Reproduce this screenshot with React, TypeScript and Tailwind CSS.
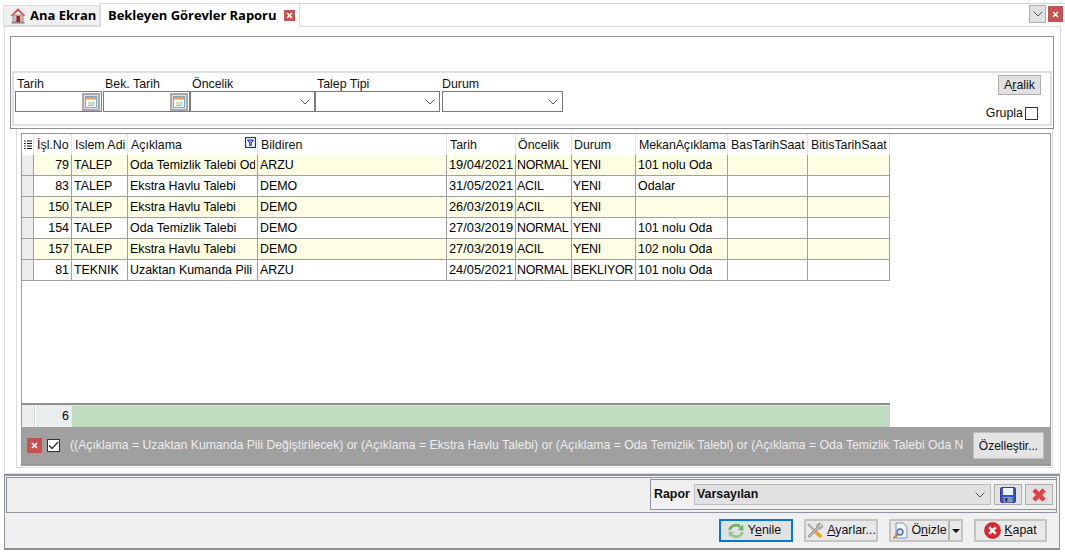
import React from "react";

const cols = [
  { t: "İşl.No", w: "w-[38px]" },
  { t: "Islem Adi", w: "w-[56px]" },
  { t: "Açıklama", w: "w-[130px]" },
  { t: "Bildiren", w: "w-[189px]" },
  { t: "Tarih", w: "w-[69px]" },
  { t: "Öncelik", w: "w-[56px]" },
  { t: "Durum", w: "w-[64px]" },
  { t: "MekanAçıklama", w: "w-[92px]" },
  { t: "BasTarihSaat", w: "w-[80px]" },
  { t: "BitisTarihSaat", w: "w-[82px]" },
];

const rows = [
  ["79", "TALEP", "Oda Temizlik Talebi Oda", "ARZU", "19/04/2021", "NORMAL", "YENI", "101 nolu Oda", "", ""],
  ["83", "TALEP", "Ekstra Havlu Talebi", "DEMO", "31/05/2021", "ACIL", "YENI", "Odalar", "", ""],
  ["150", "TALEP", "Ekstra Havlu Talebi", "DEMO", "26/03/2019", "ACIL", "YENI", "", "", ""],
  ["154", "TALEP", "Oda Temizlik Talebi", "DEMO", "27/03/2019", "NORMAL", "YENI", "101 nolu Oda", "", ""],
  ["157", "TALEP", "Ekstra Havlu Talebi", "DEMO", "27/03/2019", "ACIL", "YENI", "102 nolu Oda", "", ""],
  ["81", "TEKNIK", "Uzaktan Kumanda Pili", "ARZU", "24/05/2021", "NORMAL", "BEKLIYOR", "101 nolu Oda", "", ""],
];

function RedX({ cls }: { cls: string }) {
  return (
    <div className={`flex items-center justify-center bg-[#c75050] text-white ${cls}`}>
      <svg width="7" height="7" viewBox="0 0 7 7">
        <path d="M1 1L6 6M6 1L1 6" stroke="#fff" strokeWidth="1.6" />
      </svg>
    </div>
  );
}

function Chevron({ color = "#555" }: { color?: string }) {
  return (
    <svg width="10" height="6" viewBox="0 0 10 6">
      <path d="M0.5 0.5L5 5L9.5 0.5" fill="none" stroke={color} strokeWidth="1" />
    </svg>
  );
}

function HomeIcon() {
  return (
    <svg width="16" height="17" viewBox="0 0 16 17">
      <path d="M3 8H13V15H3Z" fill="#c9bfbd" stroke="#8e7f7e" strokeWidth="0.8" />
      <path d="M0.8 8.5L8 1.2L15.2 8.5L13.6 9.2L8 4L2.4 9.2Z" fill="#cf4340" stroke="#e8b0ac" strokeWidth="0.6" />
      <rect x="6.5" y="9" width="3.5" height="6" fill="#a81c20" />
      <rect x="1.5" y="15" width="13" height="1.6" fill="#8f8a8a" />
    </svg>
  );
}

function CalendarButton() {
  return (
    <div className="w-[18px] h-[18px] border-2 border-[#a8a8a8] bg-[#e1e1e1] flex items-center justify-center">
      <svg width="12" height="12" viewBox="0 0 12 12">
        <rect x="0.5" y="0.5" width="11" height="11" fill="#fff" stroke="#7fa6c8" />
        <rect x="1" y="1" width="10" height="2.5" fill="#e8a050" />
        <text x="6" y="10" textAnchor="middle" fontSize="6" fontFamily="Liberation Sans, sans-serif" fill="#4f8f4f">10</text>
      </svg>
    </div>
  );
}

function DateField({ w, label, ml }: { w: string; label: string; ml?: string }) {
  return (
    <div className={`${w} ${ml ?? ""} flex flex-col`}>
      <span className="h-[13px] leading-[13px] pl-[2px] text-[12.4px] text-[#111]">{label}</span>
      <div className="h-[21px] border border-[#7a7a7a] bg-white flex items-center justify-end pr-px">
        <CalendarButton />
      </div>
    </div>
  );
}

function SelectField({ w, label, ml, lp = "pl-[2px]" }: { w: string; label: string; ml?: string; lp?: string }) {
  return (
    <div className={`${w} ${ml ?? ""} flex flex-col`}>
      <span className={`h-[13px] leading-[13px] ${lp} text-[12.4px] text-[#111]`}>{label}</span>
      <div className="h-[21px] border border-[#7a7a7a] bg-white flex items-center justify-end pr-[4px]">
        <Chevron />
      </div>
    </div>
  );
}

function Btn({ w, children, cls }: { w: string; children: React.ReactNode; cls?: string }) {
  return (
    <div className={`${w} h-[23px] flex items-center justify-center gap-[3px] bg-[#e1e1e1] border-2 border-[#adadad] text-[12.4px] text-[#111] ${cls ?? ""}`}>
      {children}
    </div>
  );
}

export default function App() {
  return (
    <div className="w-[1065px] h-[553px] overflow-hidden bg-white text-[12.4px] text-black flex flex-col pt-[3px] font-['Liberation_Sans',Arial,sans-serif]">
      {/* tabs */}
      <div className="h-[24px] flex pl-[3px] shrink-0">
        <div className="mt-[2px] w-[97px] h-[21px] bg-[#f0f0f0] border border-[#dcdcdc] flex items-center pl-[6px] gap-[4px]">
          <HomeIcon />
          <span className="font-['Open_Sans',sans-serif] font-bold text-[13px] text-black">Ana Ekran</span>
        </div>
        <div className="w-[200px] h-[24px] bg-white border border-b-0 border-[#dcdcdc] flex items-center pl-[7px] z-10">
          <span className="font-['Open_Sans',sans-serif] font-bold text-[13px] tracking-[-0.05px] text-black whitespace-nowrap">Bekleyen Görevler Raporu</span>
          <RedX cls="ml-[8px] w-[11px] h-[11px]" />
        </div>
        <div className="flex-1 h-[23px] border-t border-[#d4d4d4] flex justify-end pr-[2px] pt-px gap-[2px]">
          <div className="w-[17px] h-[18px] bg-[#e1e1e1] border border-[#adadad] flex items-center justify-center">
            <Chevron />
          </div>
          <RedX cls="w-[15px] h-[16px] mt-px" />
        </div>
      </div>

      {/* main body */}
      <div className="ml-[4px] w-[1057px] h-[448px] shrink-0 -mt-px border border-[#dcdcdc] pt-[9px] pl-[5px] flex flex-col">
        {/* filter */}
        <div className="w-[1044px] h-[93px] border border-[#8a8f98] pt-[34px] pl-px shrink-0">
          <div className="w-[1040px] h-[55px] border-2 border-[#e0e0e0] flex pl-[1px] pt-[5px]">
            <DateField w="w-[87px]" label="Tarih" />
            <DateField w="w-[87px]" ml="ml-[1px]" label="Bek. Tarih" />
            <SelectField w="w-[125px]" label="Öncelik" />
            <SelectField w="w-[125px]" label="Talep Tipi" />
            <SelectField w="w-[121px]" ml="ml-[2px]" lp="pl-0" label="Durum" />
            <div className="flex-1 flex flex-col items-end pr-[9px] -mt-[3px]">
              <div className="w-[43px] h-[20px] bg-[#e1e1e1] border border-[#adadad] flex items-center justify-center text-[12.4px] text-[#111]">
                <span>A<u>r</u>alik</span>
              </div>
              <div className="flex items-center mt-[9px] mr-[3px] gap-[2px]">
                <span className="text-[12.4px] text-[#111]">Grupla</span>
                <div className="w-[13px] h-[13px] bg-white border border-[#333]" />
              </div>
            </div>
          </div>
        </div>

        {/* grid wrap */}
        <div className="w-[1037px] h-[339px] ml-[6px] border-x border-b border-[#dcdcdc] pl-[4px] pt-[4px] shrink-0">
          <div className="w-[1030px] h-[333px] border border-b-2 border-[#999] flex flex-col bg-white">
            {/* header */}
            <div className="h-[21px] flex shrink-0 bg-white">
              <div className="w-[12px] flex items-center justify-center border-r border-[#e4e4e4]">
                <svg width="8" height="10" viewBox="0 0 8 10">
                  <path d="M0 1h1.5M3 1h5M0 3.5h1.5M3 3.5h5M0 6h1.5M3 6h5M0 8.5h1.5M3 8.5h5" stroke="#111" strokeWidth="1.1" />
                </svg>
              </div>
              {cols.map((c, i) => (
                <div key={i} className={`${c.w} relative shrink-0 border-r border-[#e4e4e4] flex items-center pt-[2px] ${i === 5 || i === 6 ? "pl-[2px]" : "pl-[3px]"} ${i === 7 ? "tracking-[-0.1px]" : ""} text-[12.4px] text-[#111] whitespace-nowrap overflow-hidden`}>
                  {c.t}
                  {i === 2 && (
                    <svg className="absolute right-[1px] top-[3px]" width="11" height="11" viewBox="0 0 11 11">
                      <rect x="0.5" y="0.5" width="10" height="10" fill="#fff" stroke="#1020e8" strokeWidth="1.2" />
                      <path d="M2.5 3h6L6.2 6v2.5H4.8V6z" fill="#9fb0f0" stroke="#1020e8" strokeWidth="1" />
                    </svg>
                  )}
                </div>
              ))}
            </div>
            {/* rows */}
            <div className="h-[248px] shrink-0">
              {rows.map((r, ri) => (
                <div key={ri} className={`h-[21px] flex border-b border-[#a0a0a0] w-[868px] ${ri % 2 === 0 ? "bg-[#fefee4]" : "bg-white"}`}>
                  <div className="w-[12px] shrink-0 bg-[#ececec] border-r border-[#a0a0a0]" />
                  {r.map((v, ci) => (
                    <div key={ci} className={`${cols[ci].w} shrink-0 border-r border-[#a0a0a0] flex items-center ${ci === 0 ? "justify-end pr-[2px]" : ci === 5 || ci === 6 ? "pl-px" : ci === 2 ? "pl-[2px] pr-[2px]" : "pl-[2px]"}`}>
                      <span className={`block overflow-hidden whitespace-nowrap ${ci === 4 ? "text-[12.8px]" : ci === 5 || ci === 6 ? "text-[12.4px] tracking-[-0.25px]" : "text-[12.4px]"}`}>{v}</span>
                    </div>
                  ))}
                </div>
              ))}
            </div>
            {/* footer */}
            <div className="h-[24px] w-[868px] border-t-2 border-[#8f8f8f] flex bg-white shrink-0">
              <div className="w-[13px] bg-[#ececec] border-r border-[#d0d0d0]" />
              <div className="w-[36px] ml-[1px] bg-[#e8edee] flex items-center justify-end pr-[3px] text-[12.4px]">6</div>
              <div className="flex-1 bg-[#c0dbbf] border-t border-[#dfeedd]" />
            </div>
            {/* filter bar */}
            <div className="flex-1 bg-[#a0a0a0] flex items-center pl-[5px] pr-[5px]">
              <RedX cls="w-[15px] h-[15px] shrink-0" />
              <div className="ml-[5px] w-[13px] h-[13px] bg-white border border-[#333] flex items-center justify-center shrink-0">
                <svg width="11" height="9" viewBox="0 0 11 9">
                  <path d="M1 4.5L4 7.5L10 1" fill="none" stroke="#333" strokeWidth="1.3" />
                </svg>
              </div>
              <div className="ml-[10px] w-[893px] overflow-hidden whitespace-nowrap text-[12.25px] text-[#ececec] shrink-0">
                ((Açıklama = Uzaktan Kumanda Pili Değiştirilecek) or (Açıklama = Ekstra Havlu Talebi) or (Açıklama = Oda Temizlik Talebi) or (Açıklama = Oda Temizlik Talebi Oda N
              </div>
              <div className="ml-[10px] w-[71px] h-[27px] bg-[#e4e4e4] border border-[#bdbdbd] flex items-center justify-center text-[12px] text-[#111] shrink-0">
                Özelleştir...
              </div>
            </div>
          </div>
        </div>
      </div>

      {/* bottom */}
      <div className="ml-[4px] w-[1056px] h-[76px] shrink-0 border-y-2 border-x border-[#8f939a] bg-[#f0f0f0] flex flex-col">
        <div className="ml-px w-[1051px] h-[36px] mt-px border border-[#8f939a] flex justify-end shrink-0">
          <div className="w-[407px] h-[31px] mt-[1px] border border-[#8f939a] flex items-center pl-[3px] -mr-px">
            <span className="font-bold text-[12.4px] text-[#111] w-[40px]">Rapor</span>
            <div className="w-[297px] h-[21px] bg-[#e1e1e1] border border-[#bdbdbd] flex items-center justify-between pl-[2px] pr-[5px]">
              <span className="font-bold text-[12.4px] text-[#111]">Varsayılan</span>
              <Chevron />
            </div>
            <div className="ml-[3px] w-[28px] h-[21px] bg-[#e1e1e1] border border-[#adadad] flex items-center justify-center">
              <svg width="16" height="16" viewBox="0 0 16 16">
                <rect x="0.5" y="0.5" width="15" height="15" rx="1.5" fill="#2f5fc4" stroke="#4a2f9a" />
                <rect x="3" y="1" width="10" height="7" fill="#f0f4fa" />
                <rect x="3.5" y="10" width="9" height="5.5" fill="#8a98b8" />
                <rect x="5" y="11" width="2.5" height="3.5" fill="#2a3a6a" />
              </svg>
            </div>
            <div className="ml-[3px] w-[28px] h-[21px] bg-[#e1e1e1] border border-[#adadad] flex items-center justify-center">
              <svg width="14" height="14" viewBox="0 0 14 14">
                <path d="M2 2L12 12M12 2L2 12" stroke="#ff2a6a" strokeWidth="4.5" />
                <path d="M2 2L12 12M12 2L2 12" stroke="#d8483a" strokeWidth="2.8" />
              </svg>
            </div>
          </div>
        </div>
        <div className="flex-1 flex items-start pt-[6px] pl-[714px]">
          <Btn w="w-[74px]" cls="!border-[#0078d7] pr-[4px]">
            <svg width="18" height="16" viewBox="0 0 18 16" className="shrink-0">
              <path d="M2.5 7A6.5 6 0 0 1 13.5 4" fill="none" stroke="#6fb06a" strokeWidth="2.6" />
              <path d="M11 7L16.5 7.5L16 1.5Z" fill="#6fb06a" />
              <path d="M15.5 9A6.5 6 0 0 1 4.5 12" fill="none" stroke="#94c88d" strokeWidth="2.6" />
              <path d="M7 9L1.5 8.5L2 14.5Z" fill="#94c88d" />
            </svg>
            <span>Y<u>e</u>nile</span>
          </Btn>
          <Btn w="w-[74px]" cls="ml-[11px] !border-[#c4c4c4] !bg-[#e8e8e8]">
            <svg width="18" height="18" viewBox="0 0 18 18" className="shrink-0">
              <path d="M2 2L9 9" stroke="#a8a8a8" strokeWidth="2" />
              <path d="M9 9L15 15" stroke="#e8a818" strokeWidth="3.5" />
              <path d="M15 1.5L12.5 4L14 5.5L16.5 3C17 6 14 8 12 7L3.5 15.5L2 14L10.5 5.5C10 3 12 1 15 1.5Z" fill="#b8b8b8" stroke="#777" strokeWidth="0.6" />
            </svg>
            <span><u>A</u>yarlar...</span>
          </Btn>
          <div className="ml-[11px] flex h-[23px] w-[74px] shrink-0 border-2 border-[#c4c4c4] bg-[#e8e8e8]">
            <div className="w-[59px] flex items-center justify-center gap-[3px] border-r-2 border-[#b4b4b4]">
              <svg width="16" height="18" viewBox="0 0 16 18" className="shrink-0">
                <path d="M4 1H11L15 5V16H4Z" fill="#f4f6fb" stroke="#8090c0" />
                <circle cx="8" cy="10" r="3" fill="#cfe0f4" stroke="#50709a" strokeWidth="1.3" />
                <path d="M5.5 12.5L1.5 16.5" stroke="#c8802a" strokeWidth="2" />
              </svg>
              <span className="text-[12.4px] text-[#111]">Ö<u>n</u>izle</span>
            </div>
            <div className="flex-1 flex items-center justify-center">
              <svg width="8" height="4" viewBox="0 0 8 4"><path d="M0 0H8L4 4Z" fill="#111" /></svg>
            </div>
          </div>
          <Btn w="w-[73px]" cls="ml-[11px] !border-[#c4c4c4] !bg-[#e8e8e8]">
            <svg width="17" height="17" viewBox="0 0 17 17" className="shrink-0">
              <circle cx="8.5" cy="8.5" r="8" fill="#e0242c" stroke="#b81820" strokeWidth="0.6" />
              <path d="M5.2 5.2L11.8 11.8M11.8 5.2L5.2 11.8" stroke="#fff" strokeWidth="2.6" />
            </svg>
            <span><u>K</u>apat</span>
          </Btn>
        </div>
      </div>
    </div>
  );
}
